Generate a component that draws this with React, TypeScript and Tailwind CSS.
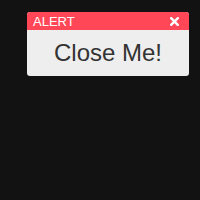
import React from 'react';

export default function App() {
  return (
    <div className="w-[200px] h-[200px] bg-[#121212] pt-[12px] pl-[27px]" style={{ fontFamily: '"Liberation Sans", Arial, sans-serif' }}>
      <div className="w-[162px] rounded-[3px] overflow-hidden bg-[#eeeeee]">
        <div className="h-[18px] bg-[#ff4757] flex items-center justify-between pl-[6px] pr-[10px]">
          <span className="text-white text-[13px] leading-none">ALERT</span>
          <svg width="9" height="9" viewBox="0 0 9 9">
            <path d="M1.2 1.2 L7.8 7.8 M7.8 1.2 L1.2 7.8" stroke="#fff" strokeWidth="2.4" strokeLinecap="square" />
          </svg>
        </div>
        <div className="h-[46px] flex items-center justify-center text-[24px] text-[#333]">
          Close Me!
        </div>
      </div>
    </div>
  );
}
